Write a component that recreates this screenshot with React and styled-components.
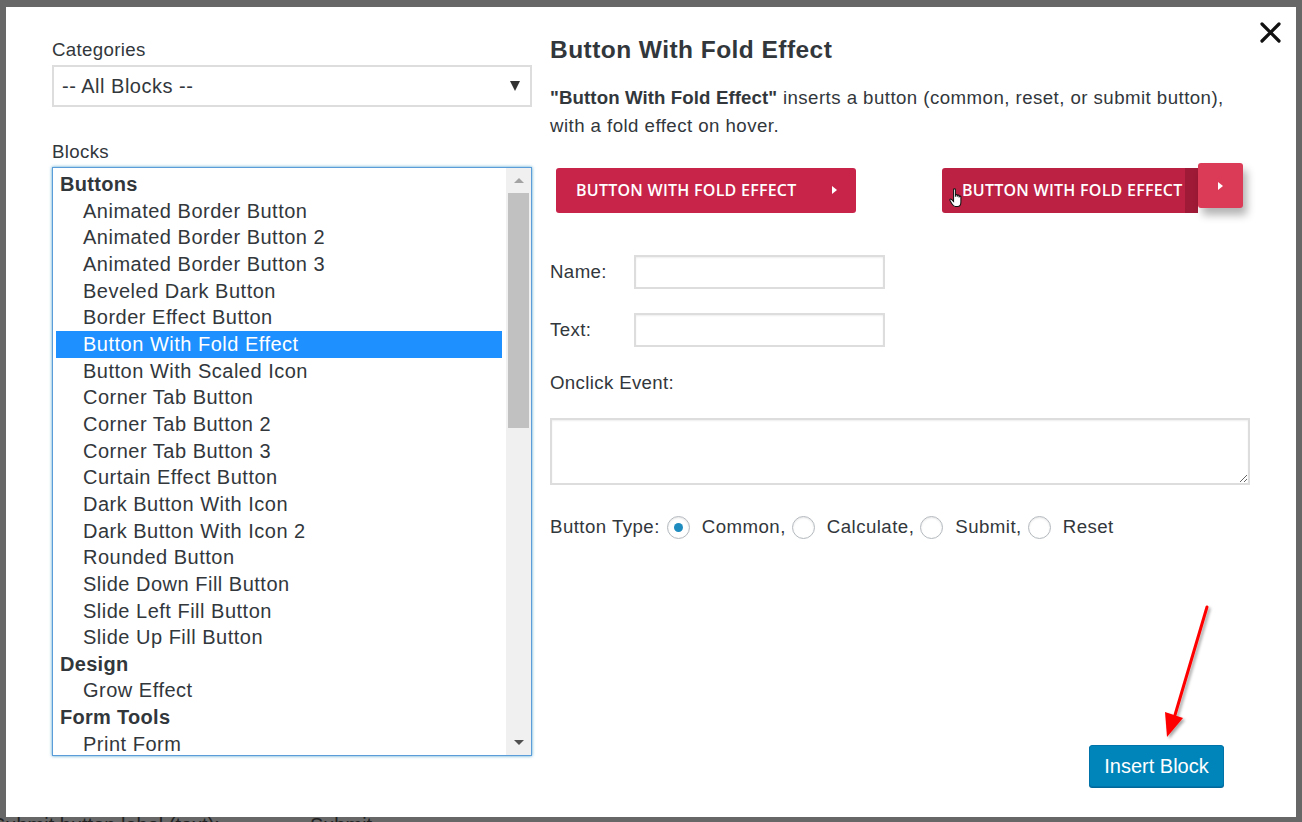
import React from 'react';
import styled, { createGlobalStyle } from 'styled-components';

const GlobalStyle = createGlobalStyle`
  html, body {
    margin: 0;
    padding: 0;
  }
  body {
    background: #676767;
    font-family: "Liberation Sans", Arial, sans-serif;
    overflow: hidden;
  }
`;

const Screen = styled.div`
  height: 822px;
  padding: 7px 6px 0;
  box-sizing: border-box;
  overflow: hidden;
`;

const Modal = styled.div`
  position: relative;
  z-index: 1;
  display: flex;
  align-items: flex-start;
  gap: 18px;
  height: 810px;
  box-sizing: border-box;
  padding: 31px 46px 30px 46px;
  background: #fff;
  color: #32373c;
`;

const CloseButton = styled.button`
  position: absolute;
  top: 15px;
  right: 15px;
  width: 21px;
  height: 21px;
  padding: 0;
  border: none;
  background: none;
  cursor: pointer;
`;

const LeftCol = styled.div`
  width: 481px;
  display: flex;
  flex-direction: column;
`;

const FieldLabel = styled.div`
  font-size: 18.67px;
  letter-spacing: 0.35px;
  line-height: 24px;
  margin-top: ${p => p.$top || 0}px;
`;

const Select = styled.div`
  margin-top: 3px;
  height: 42px;
  box-sizing: border-box;
  border: 2px solid #dddddd;
  display: flex;
  align-items: center;
  justify-content: space-between;
  padding: 0 10px 0 8px;
  font-size: 20px;
  letter-spacing: 0.5px;
  color: #32373c;
`;

const Caret = styled.span`
  width: 0;
  height: 0;
  border-left: 5px solid transparent;
  border-right: 5px solid transparent;
  border-top: 10px solid #333;
`;

const ListBox = styled.div`
  margin-top: 3px;
  height: 589px;
  box-sizing: border-box;
  border: 1px solid #5b9dd9;
  box-shadow: 0 0 3px rgba(30, 140, 190, 0.8);
  display: flex;
`;

const ListScroll = styled.div`
  flex: 1;
  overflow: hidden;
  padding: 3px 4px 0 3px;
`;

const Option = styled.div`
  height: 26.67px;
  line-height: 26.67px;
  font-size: 20px;
  letter-spacing: ${p => (p.$group ? 0.3 : 0.5)}px;
  white-space: nowrap;
  padding-left: ${p => (p.$group ? 4 : 27)}px;
  font-weight: ${p => (p.$group ? 700 : 400)};
  background: ${p => (p.$selected ? '#1e90ff' : 'transparent')};
  color: ${p => (p.$selected ? '#fff' : '#32373c')};
`;

const Scrollbar = styled.div`
  width: 25px;
  background: #f0f0f0;
  display: flex;
  flex-direction: column;
`;

const ScrollArrow = styled.div`
  height: 25px;
  display: flex;
  align-items: center;
  justify-content: center;
  &::after {
    content: '';
    width: 0;
    height: 0;
    border-left: 5px solid transparent;
    border-right: 5px solid transparent;
    ${p => (p.$down ? 'border-top: 5px solid #505050;' : 'border-bottom: 5px solid #a3a3a3;')}
  }
`;

const Thumb = styled.div`
  margin: 0 2px;
  height: 235px;
  background: #c1c1c1;
`;

const Track = styled.div`
  flex: 1;
`;

const RightCol = styled.div`
  flex: 1;
  align-self: stretch;
  display: flex;
  flex-direction: column;
`;

const Title = styled.h2`
  margin: 0;
  font-size: 24.5px;
  letter-spacing: 0.45px;
  line-height: 24px;
  font-weight: 700;
  color: #32373c;
`;

const Desc = styled.p`
  margin: 22px 0 0;
  font-size: 18.67px;
  letter-spacing: 0.45px;
  line-height: 28px;
  b {
    font-weight: 700;
    letter-spacing: 0.1px;
  }
`;

const PreviewRow = styled.div`
  margin-top: 23px;
  height: 50px;
  display: flex;
  align-items: flex-end;
  justify-content: space-between;
  padding: 0 7px 0 6px;
`;

const FoldButton = styled.div`
  width: 300px;
  height: 45px;
  box-sizing: border-box;
  border-radius: 3px;
  background: #c8244a;
  color: #fff;
  font-family: "Open Sans", "Liberation Sans", sans-serif;
  font-weight: 600;
  font-size: 16px;
  letter-spacing: 0.25px;
  display: flex;
  align-items: center;
  justify-content: space-between;
  padding: 0 19px 2px 20px;
  white-space: nowrap;
`;

const Arrowhead = styled.span`
  width: 0;
  height: 0;
  border-top: 4.5px solid transparent;
  border-bottom: 4.5px solid transparent;
  border-left: 5px solid #fff;
`;

const HoverWrap = styled.div`
  position: relative;
  width: 301px;
  height: 50px;
  display: flex;
  align-items: flex-end;
`;

const HoverBody = styled(FoldButton)`
  width: 256px;
  border-radius: 3px 0 0 3px;
  background: linear-gradient(to right, #bc2043 calc(100% - 13px), #9f1a37 calc(100% - 13px));
`;

const FoldTab = styled.div`
  position: absolute;
  top: 0;
  right: 0;
  width: 45px;
  height: 45px;
  border-radius: 3px;
  background: #dc3b57;
  box-shadow: 4px 7px 8px rgba(0, 0, 0, 0.3);
  display: flex;
  align-items: center;
  justify-content: center;
`;

const Cursor = styled.svg`
  position: absolute;
  left: 7px;
  top: 24px;
`;

const FormRow = styled.div`
  margin-top: ${p => p.$top}px;
  display: flex;
  align-items: center;
  font-size: 18.67px;
  letter-spacing: 0.4px;
`;

const RowLabel = styled.span`
  width: 84px;
`;

const TextInput = styled.input`
  width: 251px;
  height: 34px;
  box-sizing: border-box;
  border: 2px solid #dddddd;
  box-shadow: inset 0 1px 2px rgba(0, 0, 0, 0.07);
  outline: none;
`;

const TextArea = styled.textarea`
  margin-top: 23px;
  width: 700px;
  height: 67px;
  box-sizing: border-box;
  border: 2px solid #dddddd;
  box-shadow: inset 0 1px 2px rgba(0, 0, 0, 0.07);
  outline: none;
  resize: vertical;
`;

const RadioRow = styled.div`
  margin-top: 30px;
  display: flex;
  align-items: center;
  font-size: 18.67px;
  letter-spacing: 0.45px;
  line-height: 24px;
  white-space: nowrap;
`;

const Radio = styled.span`
  width: 23px;
  height: 23px;
  box-sizing: border-box;
  margin: 0 12px 0 ${p => p.$gap}px;
  border-radius: 50%;
  border: 1px solid #b4b9be;
  box-shadow: inset 0 1px 2px rgba(0, 0, 0, 0.1);
  display: flex;
  align-items: center;
  justify-content: center;
  &::before {
    content: '';
    display: ${p => (p.$checked ? 'block' : 'none')};
    width: 9px;
    height: 9px;
    border-radius: 50%;
    background: #1e8cbe;
  }
`;

const Footer = styled.div`
  margin-top: auto;
  display: flex;
  justify-content: flex-end;
  padding-right: 26px;
`;

const ButtonWrap = styled.div`
  position: relative;
`;

const InsertButton = styled.button`
  width: 135px;
  height: 42px;
  box-sizing: border-box;
  border: 1px solid #0073aa;
  border-radius: 3px;
  background: #0085ba;
  box-shadow: 0 1px 0 #006799;
  color: #fff;
  font-family: "Liberation Sans", Arial, sans-serif;
  font-size: 20px;
  padding: 0;
  cursor: pointer;
`;

const PointerArrow = styled.svg`
  position: absolute;
  left: 67px;
  top: -142px;
  overflow: visible;
`;

const BehindRow = styled.div`
  margin: -2px 0 0 -14px;
  display: flex;
  gap: 90px;
  font-size: 20px;
  line-height: 20px;
  color: #222;
  white-space: nowrap;
`;

const blocks = [
  { name: 'Buttons', group: true },
  { name: 'Animated Border Button' },
  { name: 'Animated Border Button 2' },
  { name: 'Animated Border Button 3' },
  { name: 'Beveled Dark Button' },
  { name: 'Border Effect Button' },
  { name: 'Button With Fold Effect', selected: true },
  { name: 'Button With Scaled Icon' },
  { name: 'Corner Tab Button' },
  { name: 'Corner Tab Button 2' },
  { name: 'Corner Tab Button 3' },
  { name: 'Curtain Effect Button' },
  { name: 'Dark Button With Icon' },
  { name: 'Dark Button With Icon 2' },
  { name: 'Rounded Button' },
  { name: 'Slide Down Fill Button' },
  { name: 'Slide Left Fill Button' },
  { name: 'Slide Up Fill Button' },
  { name: 'Design', group: true },
  { name: 'Grow Effect' },
  { name: 'Form Tools', group: true },
  { name: 'Print Form' },
  { name: 'Reset Form' },
];

const radios = [
  { label: 'Common,', checked: true },
  { label: 'Calculate,' },
  { label: 'Submit,' },
  { label: 'Reset' },
];

const App = () => {
  return (
    <>
      <GlobalStyle />
      <Screen>
        <Modal>
          <CloseButton aria-label="Close">
            <svg width="21" height="21" viewBox="0 0 21 21">
              <path d="M2 2 L19 19 M19 2 L2 19" stroke="#111" strokeWidth="3.2" strokeLinecap="round" />
            </svg>
          </CloseButton>

          <LeftCol>
            <FieldLabel>Categories</FieldLabel>
            <Select>
              <span>-- All Blocks --</span>
              <Caret />
            </Select>
            <FieldLabel $top={33}>Blocks</FieldLabel>
            <ListBox>
              <ListScroll>
                {blocks.map(b => (
                  <Option key={b.name} $group={b.group} $selected={b.selected}>
                    {b.name}
                  </Option>
                ))}
              </ListScroll>
              <Scrollbar>
                <ScrollArrow />
                <Thumb />
                <Track />
                <ScrollArrow $down />
              </Scrollbar>
            </ListBox>
          </LeftCol>

          <RightCol>
            <Title>Button With Fold Effect</Title>
            <Desc>
              <b>"Button With Fold Effect"</b> inserts a button (common, reset, or submit button),
              <br />
              with a fold effect on hover.
            </Desc>

            <PreviewRow>
              <FoldButton>
                <span>BUTTON WITH FOLD EFFECT</span>
                <Arrowhead />
              </FoldButton>
              <HoverWrap>
                <HoverBody>
                  <span>BUTTON WITH FOLD EFFECT</span>
                </HoverBody>
                <FoldTab>
                  <Arrowhead />
                </FoldTab>
                <Cursor width="16" height="22" viewBox="0 0 14 18">
                  <path
                    d="M4 1.5 C4 0.7 5.6 0.7 5.6 1.5 L5.6 8 L5.6 6.5 C5.6 5.7 7.2 5.7 7.2 6.5 L7.2 8 L7.2 7 C7.2 6.2 8.8 6.2 8.8 7 L8.8 8.5 L8.8 7.8 C8.8 7 10.4 7 10.4 7.8 L10.4 12.5 C10.4 14.5 9.5 16.5 7.5 16.5 L5.5 16.5 C4 16.5 3.2 15 2.2 13.5 L0.8 11 C0.4 10.2 1.5 9.5 2.2 10.2 L4 12 Z"
                    fill="#fff"
                    stroke="#111"
                    strokeWidth="0.9"
                  />
                </Cursor>
              </HoverWrap>
            </PreviewRow>

            <FormRow $top={42}>
              <RowLabel>Name:</RowLabel>
              <TextInput />
            </FormRow>
            <FormRow $top={24}>
              <RowLabel>Text:</RowLabel>
              <TextInput />
            </FormRow>
            <FieldLabel $top={24}>Onclick Event:</FieldLabel>
            <TextArea />

            <RadioRow>
              <span>Button Type:</span>
              {radios.map((r, i) => (
                <React.Fragment key={r.label}>
                  <Radio $checked={r.checked} $gap={i === 0 ? 7 : 6} />
                  <span>{r.label}</span>
                </React.Fragment>
              ))}
            </RadioRow>

            <Footer>
              <ButtonWrap>
                <PointerArrow width="60" height="140" viewBox="0 0 60 140">
                  <defs>
                    <filter id="arrowShadow" x="-50%" y="-20%" width="200%" height="140%">
                      <feDropShadow dx="2" dy="2" stdDeviation="1.5" floodColor="#000" floodOpacity="0.35" />
                    </filter>
                  </defs>
                  <g filter="url(#arrowShadow)">
                    <path d="M51 4 L19 112" stroke="#ff0000" strokeWidth="3" strokeLinecap="round" />
                    <path d="M11 134 L9 109 L27 115 Z" fill="#ff0000" />
                  </g>
                </PointerArrow>
                <InsertButton>Insert Block</InsertButton>
              </ButtonWrap>
            </Footer>
          </RightCol>
        </Modal>
        <BehindRow>
          <span>Submit button label (text):</span>
          <span>Submit</span>
        </BehindRow>
      </Screen>
    </>
  );
};

export default App;
